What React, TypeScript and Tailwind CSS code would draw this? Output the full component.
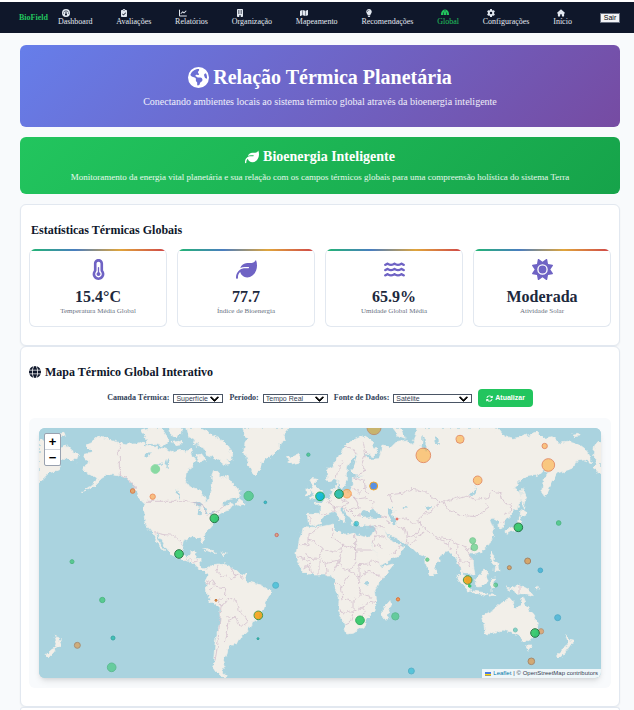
import React, { useState } from 'react';
import type { IconType } from 'react-icons';
import {
  FaGauge,
  FaClipboardCheck,
  FaChartLine,
  FaBuilding,
  FaMap,
  FaLightbulb,
  FaGear,
  FaHouse,
  FaEarthAmericas,
  FaLeaf,
  FaTemperatureHalf,
  FaWater,
  FaSun,
  FaGlobe,
  FaArrowsRotate,
  FaChevronDown,
} from 'react-icons/fa6';

interface NavItem {
  label: string;
  icon: IconType;
  active?: boolean;
}

interface Stat {
  value: string;
  label: string;
  icon: IconType;
}

interface Marker {
  x: number;
  y: number;
  r: number;
  fill: string;
  stroke: string;
  opacity?: number;
}

// Half dome used for the "Global" entry
const DomeIcon = (({ className }: { className?: string }) => (
  <svg viewBox="0 0 16 16" className={className} fill="currentColor" aria-hidden="true">
    <path d="M0 11C0 6 3 1 8 1s8 5 8 10v1H0z" />
    <path d="M5 12V7M11 12V7M8 1v4" stroke="#0f172a" strokeWidth="1.2" />
  </svg>
)) as IconType;

const navItems: NavItem[] = [
  { label: 'Dashboard', icon: FaGauge },
  { label: 'Avaliações', icon: FaClipboardCheck },
  { label: 'Relatórios', icon: FaChartLine },
  { label: 'Organização', icon: FaBuilding },
  { label: 'Mapeamento', icon: FaMap },
  { label: 'Recomendações', icon: FaLightbulb },
  { label: 'Global', icon: DomeIcon, active: true },
  { label: 'Configurações', icon: FaGear },
  { label: 'Início', icon: FaHouse },
];

const stats: Stat[] = [
  { value: '15.4°C', label: 'Temperatura Média Global', icon: FaTemperatureHalf },
  { value: '77.7', label: 'Índice de Bioenergia', icon: FaLeaf },
  { value: '65.9%', label: 'Umidade Global Média', icon: FaWater },
  { value: 'Moderada', label: 'Atividade Solar', icon: FaSun },
];

const land: string[] = [
  // North and Central America
  'M178 24 L213 36 241 44 273 48 303 41 323 51 343 56 373 61 403 71 423 64 443 71 453 61 463 86 473 96 463 111 443 126 438 156 453 176 483 186 495 206 501 221 510 216 513 196 521 176 518 150 523 128 536 130 553 151 568 146 573 166 583 166 603 191 600 206 580 212 563 216 548 232 560 236 575 226 583 232 572 246 556 250 545 256 532 266 518 276 518 296 493 321 498 346 491 345 483 326 453 326 433 338 428 361 438 386 453 381 463 368 475 371 466 391 483 396 485 416 496 424 510 420 518 411 512 432 500 434 484 425 466 411 453 401 423 391 398 381 383 361 368 336 352 316 350 320 363 346 378 371 358 351 343 316 318 286 313 246 318 226 298 206 283 171 263 151 243 141 213 136 188 151 168 171 123 196 158 171 178 151 158 141 138 131 133 116 153 101 133 91 138 76 158 71 138 51 158 41Z',
  // Arctic archipelago
  'M308 6 L328 0 366 0 380 20 393 36 373 54 343 48 323 46 318 26Z',
  'M388 0 L430 0 428 20 410 30 392 18Z M400 40 L424 36 426 54 408 56Z',
  'M443 0 L483 0 508 14 533 30 556 40 568 62 581 78 578 98 566 92 570 110 558 112 543 100 528 88 503 78 493 56 463 48 466 34 448 22Z',
  'M470 84 L490 80 500 96 484 104Z',
  // Greenland, Iceland, Newfoundland
  'M605 0 L618 6 615 21 628 31 618 46 615 66 623 96 633 121 651 141 663 126 668 101 693 86 723 61 718 46 738 36 733 21 750 0Z',
  'M742 86 L758 88 778 79 786 91 778 104 758 108 746 102 754 95Z',
  'M592 228 L600 212 612 220 616 232 604 234Z',
  // Caribbean
  'M486 362 L505 362 533 373 520 374 500 366Z M543 374 L562 378 552 383Z',
  // South America
  'M485 416 L503 426 518 411 538 408 563 411 575 416 603 436 618 441 628 461 663 471 693 486 691 501 678 526 673 546 653 576 638 581 628 606 613 621 598 636 593 646 568 656 563 681 553 696 558 716 548 731 565 746 548 746 533 731 523 716 528 646 543 576 543 541 518 521 498 481 503 456 513 436 506 424Z',
  // Great Britain, Ireland
  'M818 151 L831 154 828 171 843 186 851 201 838 211 815 214 823 201 818 186 823 171 813 161Z M801 181 L815 176 816 196 801 204Z',
  // Europe and Asia
  'M805 256 L843 256 843 236 828 226 853 219 873 206 883 181 890 184 890 166 898 162 898 186 908 190 933 191 943 166 943 151 973 144 948 141 933 126 948 106 956 80 948 82 925 120 925 160 908 183 900 160 885 155 866 158 863 126 883 116 898 86 918 51 943 36 973 24 993 36 1018 71 1003 86 975 76 990 94 1020 92 1033 51 1053 61 1073 41 1103 36 1118 51 1126 30 1133 0 1378 0 1398 26 1423 31 1453 26 1493 11 1513 31 1543 26 1563 46 1593 41 1623 51 1643 66 1653 86 1658 101 1633 96 1613 100 1608 116 1583 126 1553 136 1538 166 1518 206 1508 191 1513 156 1533 131 1513 126 1498 141 1463 146 1448 156 1423 181 1443 186 1448 211 1433 241 1413 266 1396 276 1396 296 1383 304 1378 281 1368 271 1353 271 1363 296 1363 321 1353 346 1328 371 1308 376 1298 371 1288 381 1303 396 1303 411 1308 436 1288 441 1273 431 1278 456 1293 476 1285 474 1266 446 1263 416 1248 386 1233 371 1213 376 1198 401 1191 411 1185 436 1178 446 1163 416 1158 386 1133 376 1113 356 1093 341 1068 331 1048 321 1033 301 1053 336 1073 346 1098 356 1083 381 1043 401 1028 411 1018 390 1000 350 988 328 998 321 1010 295 983 296 955 290 950 276 943 291 938 276 923 256 908 238 903 246 921 271 915 284 903 276 888 251 878 256 853 266 843 286 828 294 808 286Z',
  // Repeat of Chukotka on both edges
  'M0 40 L33 36 43 56 68 61 83 51 98 66 118 81 113 98 93 96 83 86 63 101 58 126 33 131 18 146 0 161Z M58 18 L75 16 78 24 60 26Z',
  'M1686 40 L1668 50 1662 80 1676 96 1660 120 1686 140Z M1600 18 L1618 16 1620 24 1604 26Z',
  // Africa
  'M793 296 L833 298 883 288 888 306 923 321 943 316 973 326 990 328 998 350 1018 390 1028 418 1061 408 1058 416 1028 456 1008 486 1013 516 1008 546 983 571 973 596 943 616 923 618 913 581 898 546 901 506 888 476 888 456 878 441 843 441 808 441 788 426 773 396 771 376 778 336 790 310Z',
  'M1055 516 L1058 531 1043 574 1030 571 1033 541Z',
  // Novaya Zemlya
  'M1062 0 L1082 0 1088 16 1099 31 1080 24Z M1362 0 L1376 0 1370 14Z',
  // Japan, Sakhalin
  'M1448 181 L1460 211 1453 238 1448 216Z M1446 241 L1465 254 1443 266Z M1443 268 L1446 290 1441 301 1413 309 1401 316 1403 306 1431 291Z',
  // South-east Asia
  'M1253 438 L1278 456 1298 486 1288 488 1263 461Z M1298 488 L1343 496 1341 502 1303 494Z M1310 451 L1338 426 1348 436 1338 471 1313 474Z',
  'M1354 452 L1374 450 1362 462 1370 482 1362 474 1356 488Z M1356 372 L1364 382 1362 400 1376 406 1380 430 1368 432 1370 414 1355 396Z',
  'M1398 474 L1418 481 1443 471 1468 484 1483 503 1458 496 1438 499 1423 488Z M1350 500 L1372 502 1352 508Z M1490 482 L1502 476 1496 486Z M1185 424 L1192 434 1186 438Z',
  // Australia, Tasmania
  'M1330 561 L1363 546 1383 526 1403 516 1418 516 1428 541 1443 536 1451 508 1463 536 1483 561 1498 586 1488 621 1473 638 1448 636 1433 621 1413 611 1388 606 1363 616 1338 618 1335 591Z M1460 654 L1476 654 1469 669Z',
  // New Zealand
  'M1580 620 L1591 634 1604 636 1594 656 1580 656 1588 644Z M1588 658 L1578 673 1561 690 1553 682 1573 664Z',
  'M46 620 L57 634 70 636 60 656 46 656 54 644Z M54 658 L44 673 27 690 19 682 39 664Z',
];

const water: string[] = [
  'M968 262 L975 246 990 252 1000 242 1008 252 1026 264 1022 270 990 268 974 270Z',
  'M1045 240 L1058 236 1066 250 1058 260 1070 270 1072 288 1060 292 1054 274 1046 258Z',
  'M1150 20 L1157 32 1156 60 1166 62 1162 68 1148 60 1150 40Z',
  'M1186 24 L1198 30 1200 50 1192 46Z M1290 204 L1304 188 1312 172 1308 192 1296 206Z',
  'M978 462 L990 456 990 468 980 472Z M1092 240 L1104 236 1098 244Z M1158 238 L1180 234 1168 244Z',
  'M462 226 L480 222 492 234 478 236Z M478 240 L484 238 482 262 476 260Z M492 238 L508 246 502 256Z M508 256 L532 250 518 262Z',
  'M412 184 L418 188 426 212 420 208Z M318 78 L336 72 330 86 316 90Z M352 110 L376 102 362 112Z M384 90 L388 96 386 122 380 110Z',
];

const borders: string[] = [
  'M241 44 V138 L262 148 280 168 292 186',
  'M318 220 H438 L462 226 490 232 506 262 540 248 560 232',
  'M346 314 L378 320 404 322 424 340 430 352',
  'M440 396 L450 386 462 402 478 398',
  'M538 412 L530 430 548 446 560 440 578 452 600 440 M500 468 L520 458 530 474 510 486 M530 474 L560 480 556 506 540 520 546 538 M546 538 L570 508 592 520 598 548 616 560 626 582 606 598 590 570 562 566 M546 540 L540 600 536 650 528 700 M590 568 L570 580 566 600 556 640 M575 416 L590 446 M603 438 L610 452',
  'M778 350 H810 V320 L840 300 M810 330 L850 362 886 376 912 350 884 330 880 300 M912 350 L950 366 V320 M950 366 H1000 M950 366 V400 L930 430 910 424 900 400 912 350 M850 362 L840 390 810 392 800 372 M840 390 L862 404 900 396 M774 386 L800 392 816 412 M790 420 L812 412 820 440 M840 400 V440 M858 404 L862 440 M900 400 L884 430 M930 430 L960 446 990 430 1010 440 1030 456 M960 446 L958 480 968 498 942 520 912 514 908 480 890 464 M908 480 L930 440 M968 498 L998 508 M942 520 V550 L920 556 902 548 M942 550 L968 536 984 528 1008 520 M942 550 L936 578 916 588 M968 536 L976 556 970 574 M988 410 L1000 396 1022 404 M960 446 V410 L986 408',
  'M812 262 L814 284 M843 256 L868 262 M866 212 L876 232 888 236 884 252 M888 236 L910 238 930 224 908 214 906 190 M932 192 L940 212 960 220 956 240 930 246 908 240 M940 212 L978 206 1006 224 1000 242 M945 150 L976 160 978 180 960 196 940 176 M978 180 L990 200 M930 246 L946 262 966 264 M910 100 L896 130 890 154 M918 52 L940 60 952 80 M973 40 L980 80 970 110 980 132 958 140 M990 294 L1006 302 1012 320 1040 330 M1008 296 L1034 296 M1022 264 L1044 270 1050 286 M1012 320 L1002 344 1030 358 M1052 380 L1074 366 1086 350',
  'M1060 226 L1048 200 1090 196 1120 184 1160 190 1196 220 1214 222 1250 210 1280 204 1310 214 1346 210 1360 190 1384 194 1392 220 1416 228 1418 250 1392 262',
  'M1214 222 L1226 246 1270 262 1310 266 1350 240 1340 226 M1206 222 L1180 246 1150 262 1136 276 1152 296 1190 326 1230 334 1254 348 1276 358 1300 366',
  'M1072 274 L1100 270 1124 290 1146 282 M1070 294 L1100 304 1104 330 1100 350 M1104 330 L1130 320 1146 300 M1112 352 L1132 330 1156 312 M1190 330 L1224 346 1240 334 M1226 346 L1234 366 M1254 350 L1252 380 1264 400 1262 418 M1264 400 L1284 398 1292 420 M1278 360 L1290 382 1300 396 M1384 282 L1396 278 M1443 472 V498',
];

const green = '#22c55e';
const orange = '#f59e0b';
const cyan = '#06b6d4';

const markers: Marker[] = [
  { x: 349, y: 123, r: 13, fill: green, stroke: green, opacity: 0.5 },
  { x: 281, y: 189, r: 7, fill: '#fb923c', stroke: '#ea580c', opacity: 0.7 },
  { x: 341, y: 206, r: 8, fill: '#fb9f3c', stroke: '#ea580c', opacity: 0.6 },
  { x: 526, y: 271, r: 13, fill: green, stroke: '#166534' },
  { x: 420, y: 378, r: 13, fill: green, stroke: '#166534' },
  { x: 99, y: 401, r: 6, fill: green, stroke: '#16a34a', opacity: 0.6 },
  { x: 629, y: 204, r: 14, fill: green, stroke: '#16a34a', opacity: 0.55 },
  { x: 679, y: 223, r: 4, fill: cyan, stroke: '#0f8f8a', opacity: 0.7 },
  { x: 713, y: 321, r: 5, fill: '#fb923c', stroke: '#dc2626', opacity: 0.6 },
  { x: 808, y: 80, r: 5, fill: green, stroke: '#059669', opacity: 0.6 },
  { x: 843, y: 205, r: 13, fill: cyan, stroke: '#16a34a', opacity: 0.9 },
  { x: 924, y: 197, r: 13, fill: '#fdba74', stroke: '#fb923c', opacity: 0.8 },
  { x: 900, y: 198, r: 13, fill: '#14b8a6', stroke: '#15803d' },
  { x: 1004, y: 174, r: 12, fill: '#4a86e0', stroke: orange, opacity: 0.9 },
  { x: 952, y: 287, r: 7, fill: cyan, stroke: '#0e9f9a', opacity: 0.6 },
  { x: 1005, y: -1, r: 21, fill: '#d9a532', stroke: '#c2703a', opacity: 0.65 },
  { x: 1074, y: 273, r: 3, fill: '#fb923c', stroke: '#dc2626', opacity: 0.7 },
  { x: 1153, y: 82, r: 22, fill: '#ffae3c', stroke: '#d9541c', opacity: 0.6 },
  { x: 1263, y: 34, r: 12, fill: '#ffae3c', stroke: '#d9541c', opacity: 0.6 },
  { x: 1316, y: 157, r: 13, fill: '#ffae3c', stroke: '#d9541c', opacity: 0.6 },
  { x: 1517, y: 54, r: 8, fill: '#ffa63c', stroke: '#d9541c', opacity: 0.6 },
  { x: 1528, y: 111, r: 19, fill: '#ffae3c', stroke: '#d9541c', opacity: 0.6 },
  { x: 1438, y: 298, r: 13, fill: green, stroke: '#166534' },
  { x: 1559, y: 285, r: 7, fill: green, stroke: '#16a34a', opacity: 0.6 },
  { x: 1301, y: 338, r: 9, fill: green, stroke: '#16a34a', opacity: 0.5 },
  { x: 1306, y: 358, r: 10, fill: green, stroke: '#16a34a', opacity: 0.5 },
  { x: 1165, y: 395, r: 5, fill: green, stroke: '#16a34a', opacity: 0.6 },
  { x: 1466, y: 399, r: 9, fill: '#e8943a', stroke: '#a16232', opacity: 0.7 },
  { x: 1411, y: 419, r: 6, fill: '#e8943a', stroke: '#a16232', opacity: 0.7 },
  { x: 1504, y: 427, r: 7, fill: '#1ba6d4', stroke: '#0e8fb5', opacity: 0.6 },
  { x: 1370, y: 471, r: 6, fill: green, stroke: '#16a34a', opacity: 0.5 },
  { x: 1292, y: 474, r: 4, fill: green, stroke: green },
  { x: 1286, y: 456, r: 13, fill: orange, stroke: '#2f8f36' },
  { x: 1556, y: 569, r: 9, fill: '#1ba6d4', stroke: '#0e8fb5', opacity: 0.55 },
  { x: 1429, y: 606, r: 6, fill: '#14b8a6', stroke: '#0d9488', opacity: 0.5 },
  { x: 1506, y: 610, r: 8, fill: '#fb923c', stroke: '#c2703a', opacity: 0.6 },
  { x: 1488, y: 615, r: 13, fill: green, stroke: '#166534' },
  { x: 1477, y: 700, r: 10, fill: '#e8943a', stroke: '#a16232', opacity: 0.65 },
  { x: 190, y: 516, r: 8, fill: green, stroke: '#16a34a', opacity: 0.6 },
  { x: 222, y: 630, r: 6, fill: '#14b8a6', stroke: '#0d9488', opacity: 0.7 },
  { x: 115, y: 652, r: 9, fill: '#e8943a', stroke: '#a16232', opacity: 0.6 },
  { x: 218, y: 718, r: 13, fill: green, stroke: '#16a34a', opacity: 0.5 },
  { x: 531, y: 517, r: 3, fill: '#fb923c', stroke: '#b45309' },
  { x: 710, y: 472, r: 9, fill: cyan, stroke: '#0891b2', opacity: 0.5 },
  { x: 658, y: 562, r: 13, fill: orange, stroke: '#2f8f36' },
  { x: 657, y: 632, r: 3, fill: '#14b8a6', stroke: '#0d9488', opacity: 0.8 },
  { x: 963, y: 577, r: 13, fill: green, stroke: '#16a34a' },
  { x: 1077, y: 514, r: 5, fill: '#fb923c', stroke: '#ea580c', opacity: 0.8 },
  { x: 1069, y: 565, r: 11, fill: green, stroke: '#16a34a', opacity: 0.5 },
  { x: 1117, y: 729, r: 9, fill: cyan, stroke: '#0891b2', opacity: 0.5 },
];

function NavBar() {
  return (
    <nav className="mt-0.5 flex h-[31px] items-center bg-[#0f172a] pr-3.5 pl-[19px] text-[8px] leading-[9px] text-slate-200">
      <a href="#" className="mr-2.5 font-bold text-[#22c55e]">BioField</a>
      <ul className="flex flex-1 justify-between pr-7">
        {navItems.map(({ label, icon: Icon, active }) => (
          <li key={label}>
            <a href="#" className={active ? 'block text-[#22c55e]' : 'block'}>
              <Icon className="ml-1 block h-2 w-auto min-w-2" />
              <span className="block">{label}</span>
            </a>
          </li>
        ))}
      </ul>
      <button className="h-[10px] w-5 border border-gray-500 bg-gray-100 font-['Liberation_Sans',sans-serif] text-[7px] leading-[8px] text-black">
        Sair
      </button>
    </nav>
  );
}

function StatCard({ value, label, icon: Icon }: Stat) {
  return (
    <div className="overflow-hidden rounded-md border border-t-0 border-slate-200 text-center">
      <div className="h-0.5 bg-[linear-gradient(90deg,#22b573,#4a7ec0_33%,#e0a53c_66%,#d04848)]" />
      <div className="flex flex-col items-center pt-2 pb-2.5">
        <Icon className="size-[21px] text-[#6f63c4]" />
        <div className="mt-2 text-[16px] leading-[18px] font-bold text-slate-800">{value}</div>
        <div className="mt-px text-[7px] leading-[9px] text-gray-500">{label}</div>
      </div>
    </div>
  );
}

interface FieldProps {
  id: string;
  label: string;
  options: string[];
  className: string;
}

function SelectField({ id, label, options, className }: FieldProps) {
  const [selected, setSelected] = useState(options[0]);

  return (
    <div className="flex items-center gap-1">
      <label htmlFor={id} className="text-[8px] font-bold text-slate-700">{label}</label>
      <div className="relative flex">
        <select
          id={id}
          value={selected}
          onChange={(e) => setSelected(e.target.value)}
          className={`h-[9px] appearance-none border border-gray-600 bg-white pl-0.5 font-['Liberation_Sans',sans-serif] text-[7px] leading-[7px] text-gray-700 ${className}`}
        >
          {options.map((option) => (
            <option key={option}>{option}</option>
          ))}
        </select>
        <FaChevronDown className="pointer-events-none absolute top-0 right-1 size-[9px] stroke-black stroke-[50px] text-black" />
      </div>
    </div>
  );
}

function WorldMap() {
  return (
    <div className="relative h-[250px] overflow-hidden rounded-md bg-[#aad3df] font-['Liberation_Sans',sans-serif] shadow-md">
      <svg viewBox="0 0 1686 750" preserveAspectRatio="xMidYMid slice" className="block h-full w-full">
        <defs>
          <filter id="coast" x="0" y="0" width="100%" height="100%" colorInterpolationFilters="sRGB">
            <feTurbulence type="fractalNoise" baseFrequency="0.06" numOctaves="3" seed="4" />
            <feDisplacementMap in="SourceGraphic" scale="18" xChannelSelector="R" yChannelSelector="G" />
          </filter>
        </defs>
        <g filter="url(#coast)">
          <path d="M-30 -30H1716V780H-30Z" fill="#aad3df" />
          <path d={land.join(' ')} fill="#f2efe9" stroke="#f2efe9" strokeWidth="2" strokeLinejoin="round" />
          <path d={water.join(' ')} fill="#aad3df" />
          <path d={borders.join(' ')} fill="none" stroke="#cdb6c9" strokeWidth="2" />
        </g>
        {markers.map((m) => (
          <circle
            key={`${m.x}-${m.y}`}
            cx={m.x}
            cy={m.y}
            r={m.r}
            fill={m.fill}
            stroke={m.stroke}
            strokeWidth="3"
            opacity={m.opacity ?? 0.85}
          />
        ))}
      </svg>

      {/* Zoom control */}
      <div className="absolute top-[5px] left-[5px] flex w-[17px] flex-col rounded-xs border border-gray-400 bg-white text-[13px] leading-[15px] font-bold text-black">
        <button aria-label="Ampliar" className="h-4 border-b border-gray-300">+</button>
        <button aria-label="Reduzir" className="h-[15px]">−</button>
      </div>

      {/* Attribution */}
      <div className="absolute right-0 bottom-0 flex items-center bg-white/80 px-[3px] text-[6px] leading-[9px] text-gray-700">
        <svg viewBox="0 0 12 8" className="mr-0.5 h-1 w-1.5" aria-hidden="true">
          <path fill="#4C7BE1" d="M0 0h12v4H0z" />
          <path fill="#FFD500" d="M0 4h12v3H0z" />
          <path fill="#555" d="M0 7h12v1H0z" />
        </svg>
        <a href="#" className="mr-0.5 text-[#0078a8]">Leaflet</a>
        <span>| © OpenStreetMap contributors</span>
      </div>
    </div>
  );
}

export default function App() {
  return (
    <div className="bg-slate-50 font-['Liberation_Serif',serif]">
      <NavBar />

      <main className="px-5 pt-3 pr-3.5">
        {/* Hero */}
        <header className="rounded-md bg-[linear-gradient(135deg,#667eea,#764ba2)] pt-5 pb-[19px] text-center text-white">
          <h1 className="flex items-center justify-center gap-1 text-[20px] leading-6 font-bold">
            <FaEarthAmericas className="size-[21px]" />
            Relação Térmica Planetária
          </h1>
          <p className="mt-1.5 text-[10px] leading-[13px] text-white/90">
            Conectando ambientes locais ao sistema térmico global através da bioenergia inteligente
          </p>
        </header>

        <section className="mt-2.5 rounded-md bg-[linear-gradient(135deg,#22c55e,#16a34a)] pt-3 pb-[11px] text-center text-white">
          <h2 className="flex items-center justify-center gap-1 text-[14px] leading-4 font-bold">
            <FaLeaf className="size-3.5" />
            Bioenergia Inteligente
          </h2>
          <p className="mt-1.5 text-[9px] leading-3 text-white/90">
            Monitoramento da energia vital planetária e sua relação com os campos térmicos globais para uma compreensão holística do sistema Terra
          </p>
        </section>

        {/* Stats */}
        <section className="mt-2.5 rounded-md border border-slate-200 bg-white px-2 pt-[18px] pb-[18px] shadow-xs">
          <h2 className="pl-0.5 text-[12px] leading-[14px] font-bold text-slate-900">Estatísticas Térmicas Globais</h2>
          <div className="mt-3 grid grid-cols-4 gap-2.5">
            {stats.map((stat) => (
              <StatCard key={stat.label} {...stat} />
            ))}
          </div>
        </section>

        {/* Map */}
        <section className="rounded-md border border-slate-200 bg-white px-2 pt-[18px] pb-[18px] shadow-xs">
          <h2 className="flex items-center gap-1 text-[12px] leading-[14px] font-bold text-slate-900">
            <FaGlobe className="size-3" />
            Mapa Térmico Global Interativo
          </h2>
          <form className="mt-2.5 flex items-center justify-center gap-1.5" onSubmit={(e) => e.preventDefault()}>
            <SelectField id="layer" label="Camada Térmica:" options={['Superfície', 'Atmosfera', 'Oceano']} className="w-[50px]" />
            <SelectField id="period" label="Período:" options={['Tempo Real', 'Diário', 'Mensal']} className="w-[65px]" />
            <SelectField id="source" label="Fonte de Dados:" options={['Satélite', 'Estações']} className="w-[79px]" />
            <button className="flex h-[18px] items-center justify-center gap-0.5 rounded-sm bg-[#22c55e] px-2 font-['Liberation_Sans',sans-serif] text-[7px] font-bold text-white">
              <FaArrowsRotate className="size-[7px]" />
              Atualizar
            </button>
          </form>
          <div className="mt-[11px] rounded-md bg-slate-50 p-2.5">
            <WorldMap />
          </div>
        </section>

        <section className="rounded-t-md border border-b-0 border-slate-200 bg-white pt-0.5" />
      </main>
    </div>
  );
}
